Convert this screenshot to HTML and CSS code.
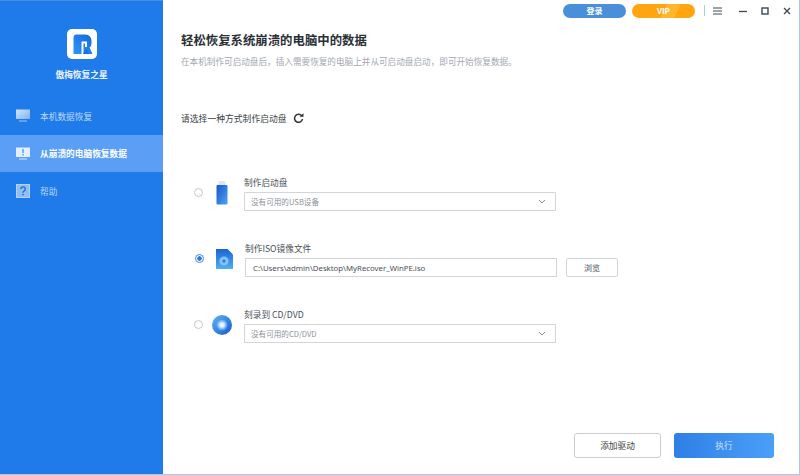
FILE: index.html
```html
<!DOCTYPE html>
<html lang="zh-CN">
<head>
<meta charset="utf-8">
<title>傲梅恢复之星</title>
<link rel="stylesheet" href="styles.css">
</head>
<body>
<div class="app">
  <aside class="sidebar">
    <div class="brand">
      <div class="logo">
        <svg width="30" height="30" viewBox="0 0 30 30"><defs><linearGradient id="rlogo" x1="0" y1="1" x2="1" y2="0"><stop offset="0" stop-color="#2f96f6"/><stop offset="1" stop-color="#1467e0"/></linearGradient></defs><rect width="30" height="30" rx="5" fill="#fff"/><path d="M9.500 5.500H18.500a6 6 0 0 1 6 6V15a4 4 0 0 1-2 3.500l3 6.500H6.500V8.500a3 3 0 0 1 3-3z" fill="url(#rlogo)"/><path d="M15.500 26V13.500h3.500V18" fill="none" stroke="#fff" stroke-width="2"/><path d="M19 19l-3 6h6z" fill="#1a6fe4"/><path d="M6 25.500h9.500v3H6z" fill="#fff"/></svg>
      </div>
      <div class="brand-name">傲梅恢复之星</div>
    </div>
    <nav class="nav">
      <div class="nav-item">
        <svg class="nav-icon" width="16" height="14" viewBox="0 0 16 14"><defs><linearGradient id="mon" x1="0" y1="0" x2="1" y2="1"><stop offset="0" stop-color="#d2e5fb"/><stop offset="1" stop-color="#7fb2f3"/></linearGradient></defs><rect x="1" y="0.500" width="14" height="9.500" fill="url(#mon)"/><rect x="4" y="11.500" width="8" height="1" fill="#a4c9f6"/></svg>
        <span>本机数据恢复</span>
      </div>
      <div class="nav-item active">
        <svg class="nav-icon" width="16" height="14" viewBox="0 0 16 14"><rect x="1" y="0.500" width="14" height="9.500" fill="#e4effd"/><rect x="7.300" y="2" width="1.500" height="4" fill="#5a9ff5"/><rect x="7.300" y="7" width="1.500" height="1.500" fill="#5a9ff5"/><rect x="4" y="11.500" width="8" height="1" fill="#d5e6fb"/></svg>
        <span>从崩溃的电脑恢复数据</span>
      </div>
      <div class="nav-item">
        <svg class="nav-icon" width="16" height="15" viewBox="0 0 16 15"><rect x="1.500" y="0.500" width="13" height="13" fill="#8fbdf5" stroke="#b4d3f8"/><path d="M5.800 5a2.200 2.200 0 1 1 3.300 2c-.8.500-1.100.8-1.100 1.700" fill="none" stroke="#1f6fd6" stroke-width="1.400"/><rect x="7.300" y="9.800" width="1.500" height="1.500" fill="#1f6fd6"/></svg>
        <span>帮助</span>
      </div>
    </nav>
  </aside>
  <main class="main">
    <header class="topbar">
      <button class="pill pill-login">登录</button>
      <button class="pill pill-vip">VIP</button>
      <span class="divider"></span>
      <svg class="win-icon menu" width="9" height="8" viewBox="0 0 9 8"><path d="M0 1h9M0 4h9M0 7h9" stroke="#3d4854" stroke-width="1"/></svg>
      <svg class="win-icon min" width="9" height="8" viewBox="0 0 9 8"><path d="M0 4.500h8" stroke="#3d4854" stroke-width="1.300"/></svg>
      <svg class="win-icon max" width="8" height="8" viewBox="0 0 8 8"><rect x="1" y="1" width="6" height="6" fill="none" stroke="#3d4854" stroke-width="1.400"/></svg>
      <svg class="win-icon close" width="8" height="8" viewBox="0 0 8 8"><path d="M1 1l6 6M7 1l-6 6" stroke="#3d4854" stroke-width="1.300"/></svg>
    </header>
    <div class="content">
      <h1 class="title">轻松恢复系统崩溃的电脑中的数据</h1>
      <p class="subtitle">在本机制作可启动盘后，插入需要恢复的电脑上并从可启动盘启动，即可开始恢复数据。</p>
      <div class="prompt">
        <span>请选择一种方式制作启动盘</span>
        <svg width="11" height="11" viewBox="0 0 11 11"><path d="M8.800 3A4 4 0 1 0 9.500 6" fill="none" stroke="#333" stroke-width="1.500"/><path d="M6.500 3.800h4V.300z" fill="#333"/></svg>
      </div>
      <div class="options">
        <div class="option">
          <span class="radio"></span>
          <div class="opt-icon">
            <svg width="12" height="24" viewBox="0 0 12 24"><defs><linearGradient id="usb" x1="0" y1="0" x2="1" y2="1"><stop offset="0" stop-color="#1a55c8"/><stop offset="1" stop-color="#4aa4f6"/></linearGradient></defs><rect x="2.500" y="0" width="7" height="5" fill="#dbe6f2"/><rect x="0.500" y="4" width="11" height="19.500" rx="1" fill="url(#usb)"/></svg>
          </div>
          <div class="field">
            <label class="field-label">制作启动盘</label>
            <div class="control select"><span>没有可用的USB设备</span><svg width="8" height="5" viewBox="0 0 8 5"><path d="M1 1l3 3 3-3" fill="none" stroke="#8a929c" stroke-width="1"/></svg></div>
          </div>
        </div>
        <div class="option option-iso">
          <span class="radio checked"></span>
          <div class="opt-icon">
            <svg width="17" height="20" viewBox="0 0 17 20"><defs><linearGradient id="iso" x1="0" y1="0" x2="0" y2="1"><stop offset="0" stop-color="#1b62d2"/><stop offset="1" stop-color="#4fb0f7"/></linearGradient></defs><path d="M0 0h11.500L17 5.500V20H0z" fill="url(#iso)"/><circle cx="8" cy="12" r="4.600" fill="#7fc3f8"/><circle cx="8" cy="12" r="1.500" fill="#2a72da"/></svg>
          </div>
          <div class="field">
            <label class="field-label">制作ISO镜像文件</label>
            <div class="field-row">
              <div class="control path"><span>C:\Users\admin\Desktop\MyRecover_WinPE.iso</span></div>
              <button class="browse">浏览</button>
            </div>
          </div>
        </div>
        <div class="option">
          <span class="radio"></span>
          <div class="opt-icon">
            <svg width="20" height="20" viewBox="0 0 20 20"><defs><linearGradient id="disc" x1="0" y1="0" x2="1" y2="1"><stop offset="0" stop-color="#5fb6f8"/><stop offset="1" stop-color="#1558cc"/></linearGradient><radialGradient id="hub"><stop offset="0.350" stop-color="#e6f4fe"/><stop offset="1" stop-color="#8ac9fa" stop-opacity="0.300"/></radialGradient></defs><circle cx="10" cy="10" r="10" fill="url(#disc)"/><circle cx="10" cy="10" r="5.500" fill="url(#hub)"/></svg>
          </div>
          <div class="field">
            <label class="field-label">刻录到 CD/DVD</label>
            <div class="control select"><span>没有可用的CD/DVD</span><svg width="8" height="5" viewBox="0 0 8 5"><path d="M1 1l3 3 3-3" fill="none" stroke="#8a929c" stroke-width="1"/></svg></div>
          </div>
        </div>
      </div>
    </div>
    <footer class="footer">
      <button class="btn btn-outline">添加驱动</button>
      <button class="btn btn-primary">执行</button>
    </footer>
  </main>
</div>
</body>
</html>
```
FILE: styles.css
```css
* { box-sizing: border-box; }
html, body { margin: 0; padding: 0; }
body {
  width: 800px;
  height: 475px;
  overflow: hidden;
  font-family: "Noto Sans CJK SC", "Liberation Sans", sans-serif;
  background: #fff;
}
button { font-family: inherit; padding: 0; cursor: default; }
.app {
  display: flex;
  width: 800px;
  height: 475px;
  border-right: 1px solid #a9c8ee;
  border-bottom: 1px solid #a9c8ee;
}
.sidebar {
  width: 163px;
  flex: none;
  background: #1f7aea;
  border-top: 1px solid #4a8fdc;
  display: flex;
  flex-direction: column;
}
.brand {
  display: flex;
  flex-direction: column;
  align-items: center;
  padding-top: 28px;
}
.logo { width: 30px; height: 30px; }
.logo svg { display: block; }
.brand-name {
  margin-top: 9px;
  color: #eaf3fe;
  font-size: 8.700px;
  font-weight: 700;
  line-height: 13px;
}
.nav {
  margin-top: 16px;
  display: flex;
  flex-direction: column;
}
.nav-item {
  height: 37.500px;
  display: flex;
  align-items: center;
  gap: 9px;
  padding: 1px 0 0 15px;
  color: #bcd8fa;
  font-size: 8.700px;
}
.nav-icon { flex: none; width: 16px; }
.nav-item.active {
  background: #5a9ff5;
  color: #fff;
  font-weight: 700;
}
.main {
  flex: 1;
  min-width: 0;
  display: flex;
  flex-direction: column;
}
.topbar {
  height: 21px;
  flex: none;
  display: flex;
  align-items: center;
  justify-content: flex-end;
  padding: 0 8px 0 0;
}
.pill {
  height: 14px;
  width: 63px;
  border: 0;
  border-radius: 7px;
  color: #fff;
  font-size: 8px;
  font-weight: 700;
  line-height: 14px;
}
.pill-login { background: #4a90d9; margin-right: 6px; }
.pill-vip {
  background: linear-gradient(115deg, #ffa50f 0 50%, #ffb52e 50% 70%, #ffa50f 70%);
}
.divider {
  width: 1px;
  height: 11px;
  background: #a9cdf0;
  margin: 0 8px 0 9px;
}
.win-icon { flex: none; display: block; }
.menu { margin-right: 17px; }
.min { margin-right: 13px; }
.max { margin-right: 14px; }
.content {
  flex: 1;
  min-height: 0;
  padding: 10px 0 0 18px;
}
.title {
  margin: 0;
  font-size: 12.400px;
  line-height: 18px;
  font-weight: 700;
  color: #2b2f36;
}
.subtitle {
  margin: 6px 0 0;
  font-size: 8.620px;
  line-height: 13px;
  color: #a3a8af;
  white-space: nowrap;
}
.prompt {
  margin-top: 43px;
  display: flex;
  align-items: center;
  gap: 6px;
  height: 14px;
  font-size: 8.800px;
  color: #3a3f46;
}
.options {
  margin-top: 52px;
  display: flex;
  flex-direction: column;
  gap: 32px;
}
.option {
  display: flex;
  align-items: center;
}
.radio {
  width: 9px;
  height: 9px;
  flex: none;
  margin: 0 0 4px 13px;
  border-radius: 50%;
  border: 1px solid #c3c7cd;
  background: #fff;
}
.radio.checked {
  border-color: #3f86e6;
  background: radial-gradient(circle, #2f78e0 0 2px, #fff 2.500px);
}
.opt-icon {
  width: 24px;
  height: 24px;
  flex: none;
  margin: 0 10px 2px 7px;
  display: flex;
  align-items: center;
  justify-content: center;
}
.opt-icon svg { display: block; }
.option-iso .radio { margin-left: 14px; }
.option-iso .opt-icon { margin-left: 8px; margin-right: 9px; }
.field { display: flex; flex-direction: column; }
.field-label {
  font-size: 8.700px;
  line-height: 11px;
  margin-bottom: 4px;
  color: #4a4f57;
}
.field-row { display: flex; align-items: center; gap: 9px; }
.control {
  width: 312px;
  height: 19px;
  border: 1px solid #d3d5dc;
  display: flex;
  align-items: center;
  justify-content: space-between;
  padding: 0 9px 0 6px;
  font-size: 7.600px;
  color: #8d9299;
}
.control.path {
  color: #4a4f57;
  padding-left: 7px;
  font-size: 7.800px;
  font-family: "Noto Sans", "Noto Sans CJK SC", sans-serif;
}
.browse {
  width: 52px;
  height: 19px;
  background: #fff;
  border: 1px solid #d3d5dc;
  border-radius: 2px;
  font-size: 8px;
  color: #4a4f57;
}
.footer {
  flex: none;
  display: flex;
  justify-content: flex-end;
  gap: 13px;
  padding: 0 25px 16px 0;
}
.btn {
  height: 25px;
  border-radius: 3px;
  font-size: 8.700px;
}
.btn-outline {
  width: 87px;
  background: #fff;
  border: 1px solid #c9cbd3;
  color: #3a3f46;
}
.btn-primary {
  width: 100px;
  border: 0;
  color: #cfe4fc;
  background: linear-gradient(90deg, #2f7fe6, #4a9ff8);
}
```
